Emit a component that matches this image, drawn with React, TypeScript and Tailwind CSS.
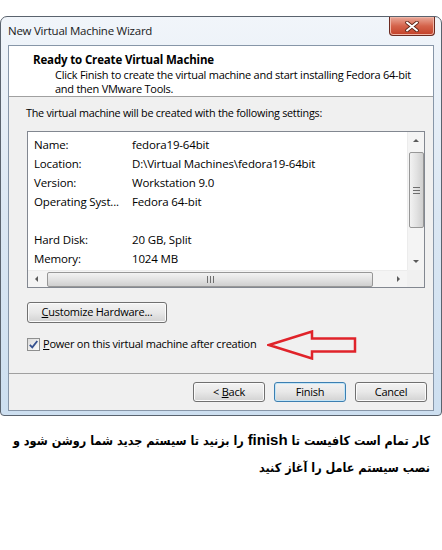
import React from "react";

function Btn({ children, primary = false, w = "w-[72px]" }: { children: React.ReactNode; primary?: boolean; w?: string }) {
  return (
    <div
      className={`${w} h-[20px] rounded-[3px] border flex items-center justify-center text-[11px] text-black bg-gradient-to-b from-[#f3f3f3] via-[#e8e8e8] to-[#d2d2d2] ${
        primary ? "border-[#3c7fb1] shadow-[inset_0_0_0_1px_#c4e5f6]" : "border-[#707070] shadow-[inset_0_0_0_1px_#fbfbfb]"
      }`}
    >
      {children}
    </div>
  );
}

function Tri({ dir }: { dir: "up" | "down" | "left" | "right" }) {
  const pts = {
    up: "1,5 4,2 7,5",
    down: "1,2 4,5 7,2",
    left: "5,1 2,4 5,7",
    right: "2,1 5,4 2,7",
  }[dir];
  return (
    <svg width="8" height="8" viewBox="0 0 8 8">
      <polygon points={pts} fill="#5a5a5a" />
    </svg>
  );
}

const rows: [string, string][] = [
  ["Name:", "fedora19-64bit"],
  ["Location:", "D:\\Virtual Machines\\fedora19-64bit"],
  ["Version:", "Workstation 9.0"],
  ["Operating Syst...", "Fedora 64-bit"],
  ["", ""],
  ["Hard Disk:", "20 GB, Split"],
  ["Memory:", "1024 MB"],
];

export default function App() {
  return (
    <div className="w-[442px] h-[550px] bg-white font-['Open_Sans','Noto_Sans',sans-serif] text-[11px] tracking-[-0.25px] text-black pt-[16px] overflow-hidden">
      {/* window frame */}
      <div className="w-[442px] rounded-t-[7px] rounded-b-[4px] border border-[#5a636e] bg-gradient-to-b from-[#f1f5fa] via-[#dbe7f3] to-[#cddff0] px-[7px] pb-[4px]">
        {/* title bar */}
        <div className="h-[28px] flex items-start justify-between">
          <div className="mt-[6px] text-[11.5px] leading-[16px] text-[#1a1a1a]">New Virtual Machine Wizard</div>
          <div className="-mr-[1px] w-[46px] h-[19px] rounded-b-[4px] border border-t-0 border-[#6b2a20] bg-gradient-to-b from-[#e9a99a] via-[#d4634b] to-[#c23f27] shadow-[inset_0_0_0_1px_#f0b7a8] flex items-center justify-center">
            <svg width="14" height="11" viewBox="0 0 14 11">
              <path d="M2 1.5 L12 9.5 M12 1.5 L2 9.5" stroke="#5a2418" strokeWidth="3.6" strokeLinecap="round" />
              <path d="M2 1.5 L12 9.5 M12 1.5 L2 9.5" stroke="#ffffff" strokeWidth="2" strokeLinecap="round" />
            </svg>
          </div>
        </div>

        {/* client area */}
        <div className="border border-[#8796a8] bg-[#f0f0f0]">
          {/* header */}
          <div className="h-[51px] bg-white border-b border-[#a0a0a0] pt-[6px] pl-[24px]">
            <div className="font-bold text-[11.5px] leading-[16px] tracking-[-0.15px]">Ready to Create Virtual Machine</div>
            <div className="pl-[22px] text-[11px] leading-[14px]">
              Click Finish to create the virtual machine and start installing Fedora 64-bit
              <br />
              and then VMware Tools.
            </div>
          </div>

          {/* body */}
          <div className="pl-[18px] pr-[8px] pt-[8px] pb-[22px]">
            <div className="leading-[16px] -ml-[1px] text-[10.8px]">The virtual machine will be created with the following settings:</div>

            {/* list box */}
            <div className="mt-[10px] h-[157px] border border-[#828790] bg-white flex flex-col">
              <div className="flex-1 flex">
                <div className="flex-1 px-[6px] pt-[3px]">
                  {rows.map(([k, v], i) => (
                    <div key={i} className="h-[19px] flex items-center text-[11.5px] tracking-[-0.15px]">
                      <div className="w-[98px]">{k}</div>
                      <div>{v}</div>
                    </div>
                  ))}
                </div>
                {/* vertical scrollbar */}
                <div className="w-[17px] bg-[#f4f4f4] border-l border-[#ececec] flex flex-col items-center">
                  <div className="h-[17px] flex items-center justify-center">
                    <Tri dir="up" />
                  </div>
                  <div className="mt-[3px] w-[15px] h-[76px] rounded-[2px] border border-[#979797] bg-gradient-to-r from-[#f2f2f2] via-[#e2e2e2] to-[#cfcfcf] flex flex-col items-center justify-center gap-[2px]">
                    <div className="w-[7px] h-[1px] bg-[#6e6e6e]" />
                    <div className="w-[7px] h-[1px] bg-[#6e6e6e]" />
                    <div className="w-[7px] h-[1px] bg-[#6e6e6e]" />
                  </div>
                  <div className="flex-1" />
                  <div className="h-[17px] flex items-center justify-center">
                    <Tri dir="down" />
                  </div>
                </div>
              </div>
              {/* horizontal scrollbar */}
              <div className="h-[17px] flex">
                <div className="flex-1 bg-[#f4f4f4] border-t border-[#ececec] flex items-center">
                  <div className="w-[17px] h-[16px] flex items-center justify-center">
                    <Tri dir="left" />
                  </div>
                  <div className="ml-[2px] w-[326px] h-[15px] rounded-[2px] border border-[#979797] bg-gradient-to-b from-[#f2f2f2] via-[#e2e2e2] to-[#cfcfcf] flex items-center justify-center gap-[2px]">
                    <div className="w-[1px] h-[7px] bg-[#6e6e6e]" />
                    <div className="w-[1px] h-[7px] bg-[#6e6e6e]" />
                    <div className="w-[1px] h-[7px] bg-[#6e6e6e]" />
                  </div>
                  <div className="flex-1" />
                  <div className="w-[17px] h-[16px] flex items-center justify-center">
                    <Tri dir="right" />
                  </div>
                </div>
                <div className="w-[17px] bg-[#f0f0f0]" />
              </div>
            </div>

            {/* customize */}
            <div className="mt-[14px]">
              <Btn w="w-[140px] h-[21px]">
                <span>
                  <span className="underline">C</span>ustomize Hardware...
                </span>
              </Btn>
            </div>

            {/* checkbox row */}
            <div className="mt-[15px] h-[13px] flex items-center">
              <div className="w-[13px] h-[13px] border border-[#8e8f8f] bg-gradient-to-br from-[#dcdcdc] to-[#fbfbfb] flex items-center justify-center">
                <svg width="11" height="11" viewBox="0 0 11 11">
                  <path d="M1.8 5.8 L4.3 8.4 L9.3 2" fill="none" stroke="#34508f" strokeWidth="1.8" />
                </svg>
              </div>
              <div className="ml-[3px] text-[11px] whitespace-nowrap">
                <span className="underline">P</span>ower on this virtual machine after creation
              </div>
              <svg className="ml-[10px] shrink-0" width="92" height="30" viewBox="0 0 92 30">
                <polygon
                  points="2,15 45,1.5 45,8.5 88,8.5 88,21.5 45,21.5 45,28.5"
                  fill="none"
                  stroke="#e0232a"
                  strokeWidth="2.5"
                  strokeLinejoin="miter"
                />
              </svg>
            </div>
          </div>

          {/* separator + buttons */}
          <div className="border-t border-[#a0a0a0] pt-[8px] pb-[8px] pr-[6px] flex justify-end gap-[9px]">
            <Btn>
              <span>
                &lt; <span className="underline">B</span>ack
              </span>
            </Btn>
            <Btn primary>Finish</Btn>
            <Btn>Cancel</Btn>
          </div>
        </div>
      </div>

      {/* persian caption */}
      <div
        dir="rtl"
        className="mt-[10px] pr-[12px] text-right font-bold text-[12.5px] tracking-normal leading-[27px] text-black whitespace-nowrap font-['DejaVu_Sans_Condensed','DejaVu_Sans',sans-serif]"
      >
        کار تمام است کافیست تا{" "}
        <span dir="ltr" className="font-['Liberation_Sans',sans-serif] text-[15px]">
          finish
        </span>{" "}
        را بزنید تا سیستم جدید شما روشن شود و
        <br />
        نصب سیستم عامل را آغاز کنید
      </div>
    </div>
  );
}
